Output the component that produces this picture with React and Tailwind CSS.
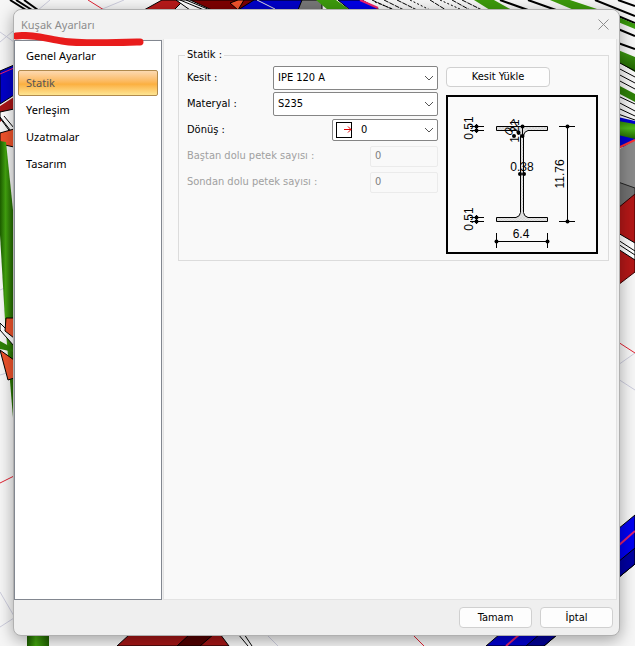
import React, { useState } from 'react';

const PAGES = ['Genel Ayarlar', 'Statik', 'Yerleşim', 'Uzatmalar', 'Tasarım'];

const Chevron = () => (
  <svg className="pointer-events-none absolute right-1 top-1/2 -translate-y-1/2" width="10" height="6" viewBox="0 0 10 6" fill="none" stroke="#555" aria-hidden="true">
    <path d="M1 1l4 4 4-4" />
  </svg>
);

const SelectField = ({ id, label, options, wide, children }) => (
  <div className="flex h-[26px] items-center justify-between">
    <label htmlFor={id}>{label}</label>
    <div className={wide ? 'relative w-[165px]' : 'relative w-[106px]'}>
      <select
        id={id}
        className={`block w-full appearance-none rounded-xs border border-[#858585] bg-white pb-px outline-none ${wide ? 'h-6 pl-1' : 'h-[22px] pl-7'}`}
      >
        {options.map((option) => (
          <option key={option}>{option}</option>
        ))}
      </select>
      {children}
      <Chevron />
    </div>
  </div>
);

const CountField = ({ id, label }) => (
  <div className="flex h-[26px] items-center justify-between text-[#a0a0a0]">
    <label htmlFor={id}>{label}</label>
    <input
      id={id}
      disabled
      defaultValue="0"
      className="h-[21px] w-[68px] rounded-xs border border-[#ebebeb] bg-[#f9f9f9] px-1 pb-0.5 text-[#808080]"
    />
  </div>
);

const RotationIcon = () => (
  <svg className="pointer-events-none absolute left-1 top-[3px]" width="16" height="16" viewBox="0 0 16 16" fill="none" aria-hidden="true">
    <rect x="0.5" y="0.5" width="15" height="15" stroke="#000" />
    <path d="M8 7.5h7M12 4.500l3 3-3 3" stroke="#e00000" />
  </svg>
);

const SectionDrawing = () => (
  <svg
    className="block h-[159px] w-[152px] border-2 border-black bg-[#fafafa]"
    viewBox="2 2 148 155"
    fontFamily="Liberation Sans, Arial, sans-serif"
    fontSize="12"
    textAnchor="middle"
    role="img"
    aria-label="IPE 120 A"
  >
    <defs>
      <pattern id="hatch" width="3" height="3" patternUnits="userSpaceOnUse">
        <rect width="3" height="3" fill="#e4e4e4" />
        <path d="M0 0l3 3M3 0L0 3" stroke="#cfcfcf" strokeWidth="0.5" />
      </pattern>
    </defs>
    <path
      d="M50.5 31.5h51v4H82q-4 1-4.500 5v77q.5 4 4.500 5h19.500v4h-51v-4H70q4-1 4.500-5v-77q-.5-4-4.500-5H50.500z"
      fill="url(#hatch)"
      stroke="#000"
    />
    <g stroke="#000" shapeRendering="crispEdges">
      <path d="M121.500 31v95M113 31.500h16M113 126.500h16" />
      <path d="M50 146.500h52M50.500 138v15M101.500 138v15" />
      <path d="M24 31.500h14M24 35.500h14M30.500 29v9" />
      <path d="M24 122.500h14M24 126.500h14M30.500 120v9" />
      <path d="M76.500 31v10" />
    </g>
    <g>
      <circle cx="121.500" cy="31.500" r="2" />
      <circle cx="121.500" cy="126.500" r="2" />
      <circle cx="50.500" cy="146.500" r="2" />
      <circle cx="101.500" cy="146.500" r="2" />
      <circle cx="30.500" cy="31.500" r="2" />
      <circle cx="30.500" cy="35.500" r="2" />
      <circle cx="30.500" cy="122.500" r="2" />
      <circle cx="30.500" cy="126.500" r="2" />
      <circle cx="76.500" cy="31.500" r="2" />
      <circle cx="76.500" cy="41" r="2" />
      <circle cx="72.500" cy="37.500" r="2" />
      <circle cx="68" cy="41" r="2" />
      <circle cx="74" cy="79" r="2" />
      <circle cx="78" cy="79" r="2" />
    </g>
    <text x="76" y="76">0.38</text>
    <text x="75" y="143">6.4</text>
    <text transform="translate(118 79) rotate(-90)">11.76</text>
    <text transform="translate(27 33) rotate(-90)">0.51</text>
    <text transform="translate(27 124) rotate(-90)">0.51</text>
    <text transform="translate(73 36) rotate(-90)">1.21</text>
    <text transform="translate(69 35) rotate(-50)">0.7</text>
  </svg>
);

// Steel frame model that shows behind the dialog
const ModelView = () => (
  <svg className="absolute inset-0 h-full w-full" viewBox="0 0 635 646" preserveAspectRatio="none" aria-hidden="true">
    <defs>
      <linearGradient id="tube" x1="0" x2="1">
        <stop offset="0" stopColor="#1c5c00" />
        <stop offset="0.4" stopColor="#43a50f" />
        <stop offset="1" stopColor="#1f5f00" />
      </linearGradient>
      <linearGradient id="tubeFlat" x1="0" x2="0" y1="0" y2="1">
        <stop offset="0" stopColor="#2f8a05" />
        <stop offset="0.4" stopColor="#4db81a" />
        <stop offset="1" stopColor="#1f5f00" />
      </linearGradient>
    </defs>
    <rect width="635" height="646" fill="#f6f6f6" />
    <g stroke="#cdcddd" fill="none">
      <path d="M0 32l14 10M0 42L50 0M100 10l24-10M0 290l14-6M0 375l14-4M0 592l14 24M0 627l14-9M618 365l17-12M618 379l17 11M268 636l10 10" />
    </g>
    <g stroke="#e02030" fill="none">
      <path d="M88 0l16 10M0 483l14-7M414 636l10 10M618 342l17 11" />
    </g>

    <g stroke="#000">
      <path d="M10 0l16 10M16 0l16 10M24 0l14 10" strokeWidth="2" />
      <path d="M144 10l18-10h22l-10 10z" fill="#b81a1a" />
      <path d="M176 0h80l-12 10h-52z" fill="#7d0000" />
      <path d="M176 0h14l22 10h-22z" fill="#fff" />
      <path d="M180 0l24 10M186 0l24 10" />
      <path d="M230 3l8-3h6l-6 10z" fill="#f0532c" />
      <path d="M238 10l16-10h58l-14 10z" fill="#0000c8" />
      <path d="M298 10l4-10h20v10z" fill="#777" />
      <path d="M338 0h24l18 10h-30z" fill="#0000e6" />
    </g>
    <path d="M257 0l18 9" stroke="#ddd" />
    <path d="M360 0l18 8" stroke="#f0206a" strokeWidth="2" />
    <path d="M316 0h20l14 10h-22z" fill="#3c9a0c" />
    <g stroke="#000">
      <path d="M372 0l22 10M384 0l20 10M397 0l20 10M430 0l16 10M452 0l18 10M462 0l20 10" strokeDasharray="5 1" />
      <path d="M500 0l28 10M528 0l28 10M595 0l40 16M618 0l17 6" strokeWidth="2" />
      <path d="M410 0l20 10M440 0l22 10M375 2l20 8" strokeDasharray="2 2" />
    </g>
    <path d="M474 0h20l18 10h-22zM550 0h20l30 10h-26z" fill="#3c9a0c" />

    <g>
      <path d="M0 71l14-6v30L0 104z" fill="#0000c8" stroke="#000" />
      <path d="M0 74l14-6" stroke="#f0206a" />
      <path d="M0 106l14-9v14L0 122z" fill="#a81414" />
      <path d="M0 112l14-3v28L0 118z" fill="#fff" stroke="#000" />
      <path d="M0 117l14 18M4 116l10 12" stroke="#000" />
      <path d="M0 133l14-4v18L0 144z" fill="#f0532c" stroke="#000" />
      <path d="M0 141l6 1 8 78V430L5 320 0 235z" fill="url(#tube)" />
      <path d="M0 323l14 14v9L0 330z" fill="#fff" stroke="#000" />
      <path d="M6 318h8v20l-9-7zM0 350l14 10v18l-6 2z" fill="#f0532c" stroke="#000" />
      <path d="M0 341l9 5 5 6-14-3z" fill="#2e8007" />
    </g>

    <g>
      <path d="M618 16l17 7M618 29l17 7M618 43l17 6" stroke="#000" strokeWidth="2" />
      <path d="M618 17l17 7v5l-17-7zM618 50l17 7v15l-17-10z" fill="url(#tubeFlat)" />
      <path d="M618 62l17 9M618 68l17 9M618 74l17 9M618 80l17 9M618 96l17 8M618 102l17 9M618 108l17 8M618 114l17 6" stroke="#000" strokeWidth="1" />
      <path d="M618 85l17 9v8l-17-9z" fill="#2e8007" />
      <path d="M618 117l17 4v24l-17 3z" fill="#0000d0" />
      <path d="M618 121l17 3v15l-17-4z" fill="url(#tubeFlat)" />
      <path d="M618 150l17-10v54l-17-12z" fill="#8a8a8a" />
      <path d="M618 148l17-8" stroke="#ff3030" strokeWidth="2" />
      <path d="M618 182l17 6v8l-17 12z" fill="#707070" stroke="#222" />
      <path d="M618 208l17-14v78l-17 13z" fill="#b31717" stroke="#300" />
      <path d="M618 233l17 10v17l-17-11z" fill="#fff" stroke="#000" />
      <path d="M618 240l17 11M618 244l17 11" stroke="#000" />
      <path d="M618 529l17-14v49l-17 14z" fill="#0000f0" stroke="#000" />
      <path d="M618 562l17-14v16l-17 14z" fill="#0000a0" stroke="#000" />
      <path d="M618 546l17-15" stroke="#e0206a" strokeWidth="2" />
    </g>

    <g>
      <path d="M27 634h22v12H27z" fill="url(#tube)" />
      <path d="M130 634h90l9 12H117z" fill="#a31616" stroke="#000" />
      <path d="M190 634h24l-14 12h-23z" fill="#520000" stroke="#000" />
      <path d="M238 634l10 12M244 634l8 12" stroke="#000" />
      <path d="M500 634h58l-14 12h-58z" fill="#0000d0" stroke="#000" />
      <path d="M540 634h18l-14 12h-18z" fill="#000096" stroke="#000" />
      <path d="M520 634l-14 12" stroke="#e0206a" strokeWidth="2" />
    </g>
  </svg>
);

const buttonClass = 'rounded-sm border border-[#d0d0d0] bg-[#fdfdfd] text-center';

const App = () => {
  const [page, setPage] = useState('Statik');

  return (
    <div className="relative flex min-h-screen overflow-hidden pt-[9px] pr-4 pb-2.5 pl-[13px] font-['DejaVu_Sans_Condensed','DejaVu_Sans',sans-serif] text-[11px] leading-4 text-black">
      <ModelView />
      <div role="dialog" aria-labelledby="dialog-title" className="relative flex flex-1 flex-col rounded-lg border border-[#b0b0b0] bg-[#efefef] shadow-[0_4px_16px_rgba(0,0,0,0.35)]">
        <header className="flex h-[29px] items-center justify-between rounded-t-lg bg-[#f2f2f2] pr-2.5 pl-[7px] font-['Noto_Sans',sans-serif]">
          <h1 id="dialog-title" className="text-[#8c8c8c]">Kuşak Ayarları</h1>
          <button type="button" aria-label="Kapat">
            <svg width="11" height="11" viewBox="0 0 11 11" stroke="#8c8c8c" aria-hidden="true">
              <path d="M0.500 0.500l10 10M10.500 0.500l-10 10" />
            </svg>
          </button>
        </header>

        <div className="flex flex-1">
          <nav className="mt-px w-[148px] border border-[#828790] bg-white px-[3px] py-0.5 font-['Noto_Sans',sans-serif]">
            <ul className="flex flex-col gap-px">
              {PAGES.map((name) => (
                <li key={name}>
                  <button
                    type="button"
                    onClick={() => setPage(name)}
                    className={`block h-[26px] w-full rounded-xs border px-[7px] text-left ${
                      page === name
                        ? 'border-[#b18a4d] bg-linear-to-b from-[#fcd9b0] via-[#fbb040] via-55% to-[#fde591] text-[#555]'
                        : 'border-transparent'
                    }`}
                  >
                    {name}
                  </button>
                </li>
              ))}
            </ul>
          </nav>

          <main className="mr-0.5 ml-px flex-1 border-r border-b border-l border-[#e3e3e3] bg-[#f9f9f9] px-[7px] pt-2 pl-3.5">
            <fieldset className="h-[214px] border border-[#dcdcdc] pr-2.5 pl-2">
              <legend className="-ml-0.5 px-0.5">Statik :</legend>
              <div className="flex gap-2 pt-0.5">
                <div className="w-[251px] shrink-0">
                  <SelectField id="kesit" label="Kesit :" options={['IPE 120 A']} wide />
                  <SelectField id="materyal" label="Materyal :" options={['S235']} wide />
                  <SelectField id="donus" label="Dönüş :" options={['0']}>
                    <RotationIcon />
                  </SelectField>
                  <CountField id="bastan" label="Baştan dolu petek sayısı :" />
                  <CountField id="sondan" label="Sondan dolu petek sayısı :" />
                </div>
                <div className="flex flex-col items-start gap-2 pt-0.5">
                  <button type="button" className={`${buttonClass} h-5 w-[104px]`}>Kesit Yükle</button>
                  <SectionDrawing />
                </div>
              </div>
            </fieldset>
          </main>
        </div>

        <footer className="flex h-[35px] items-center justify-end gap-2 pr-1.5">
          <button type="button" className={`${buttonClass} h-[21px] w-[73px]`}>Tamam</button>
          <button type="button" className={`${buttonClass} h-[21px] w-[73px]`}>İptal</button>
        </footer>

        <svg className="pointer-events-none absolute left-0 top-[22px]" width="132" height="14" viewBox="0 0 132 14" fill="none" aria-hidden="true">
          <path d="M2 4c14-2 28 2 46 5s46 2 78 1" stroke="#e81c1c" strokeWidth="7" strokeLinecap="round" />
        </svg>
      </div>
    </div>
  );
};

export default App;
